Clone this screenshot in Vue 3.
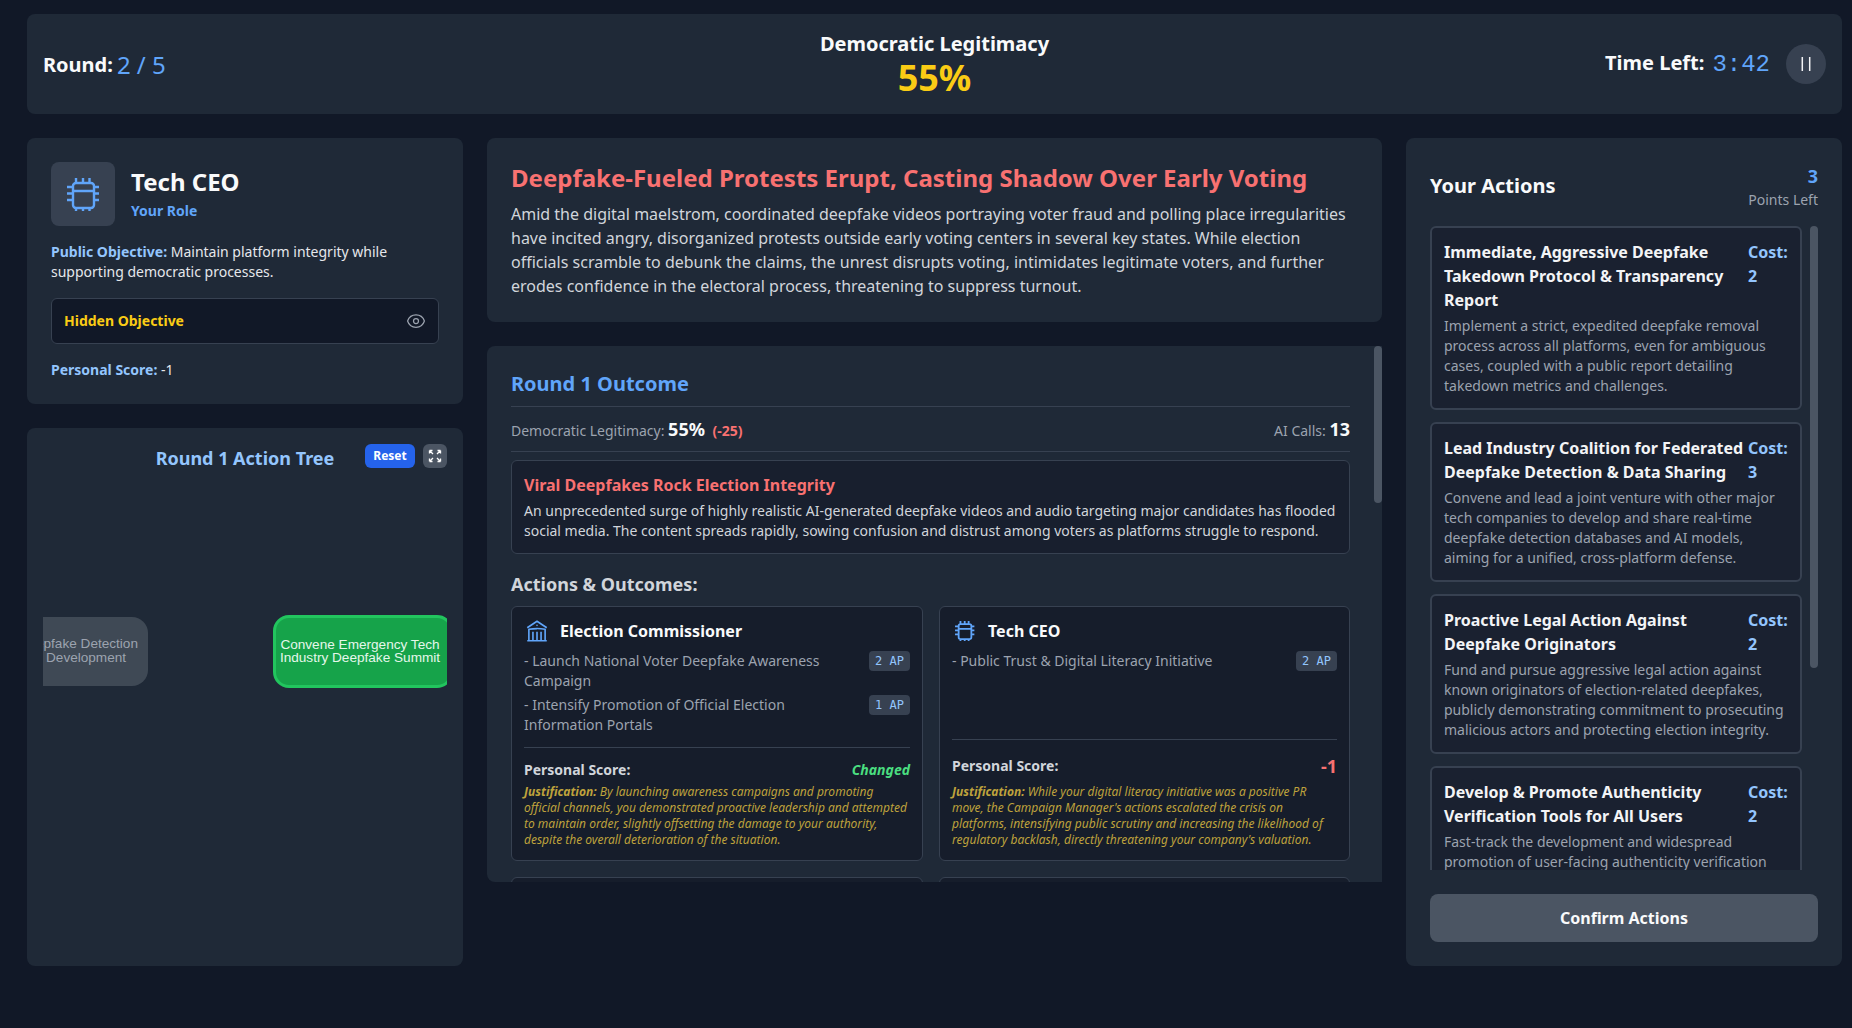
<script setup>
const chip = { vb: "62 173 43 43", sw: 3, d: "M76 183h15a3 3 0 0 1 3 3v19a3 3 0 0 1-3 3h-15a3 3 0 0 1-3-3v-19a3 3 0 0 1 3-3zM73 191h21M76 178v5M83 178v5M89.500 178v5M76 208v3M83 208v3M89.500 208v3M67 187h6M67 193.500h6M67 200h6M94 187h5M94 193.500h5M94 200h5" }
const bank = { vb: "0 0 24 24", sw: 1.5, d: "M12 21v-8.250M15.750 21v-8.250M8.250 21v-8.250M3 9l9-6 9 6m-1.500 12V10.332A48.360 48.360 0 0 0 12 9.750c-2.551 0-5.056.2-7.500.582V21M3 21h18M12 6.750h.008v.008H12V6.750Z" }

const players = [
  {
    name: "Election Commissioner", icon: bank,
    actions: [
      { text: "- Launch National Voter Deepfake Awareness Campaign", ap: "2 AP" },
      { text: "- Intensify Promotion of Official Election Information Portals", ap: "1 AP" },
    ],
    score: "Changed", scoreClass: "changed",
    just: "By launching awareness campaigns and promoting official channels, you demonstrated proactive leadership and attempted to maintain order, slightly offsetting the damage to your authority, despite the overall deterioration of the situation.",
  },
  {
    name: "Tech CEO", icon: chip,
    actions: [{ text: "- Public Trust & Digital Literacy Initiative", ap: "2 AP" }],
    score: "-1", scoreClass: "neg",
    just: "While your digital literacy initiative was a positive PR move, the Campaign Manager's actions escalated the crisis on platforms, intensifying public scrutiny and increasing the likelihood of regulatory backlash, directly threatening your company's valuation.",
  },
]

const actions = [
  { title: "Immediate, Aggressive Deepfake Takedown Protocol & Transparency Report", cost: 2, desc: "Implement a strict, expedited deepfake removal process across all platforms, even for ambiguous cases, coupled with a public report detailing takedown metrics and challenges." },
  { title: "Lead Industry Coalition for Federated Deepfake Detection & Data Sharing", cost: 3, desc: "Convene and lead a joint venture with other major tech companies to develop and share real-time deepfake detection databases and AI models, aiming for a unified, cross-platform defense." },
  { title: "Proactive Legal Action Against Deepfake Originators", cost: 2, desc: "Fund and pursue aggressive legal action against known originators of election-related deepfakes, publicly demonstrating commitment to prosecuting malicious actors and protecting election integrity." },
  { title: "Develop & Promote Authenticity Verification Tools for All Users", cost: 2, desc: "Fast-track the development and widespread promotion of user-facing authenticity verification tools across all platforms." },
]
</script>

<template>
  <div class="page">
    <header class="topbar">
      <div class="round"><span class="label">Round:</span><span class="round-val">2 / 5</span></div>
      <div class="legit">
        <div class="legit-label">Democratic Legitimacy</div>
        <div class="legit-val">55%</div>
      </div>
      <div class="timer">
        <span class="label time-label">Time Left:</span>
        <span class="time">3:42</span>
        <button class="pause" aria-label="Pause">
          <svg width="24" height="24" viewBox="0 0 24 24" fill="none" stroke="#f3f4f6" stroke-width="1.5"><path d="M8.300 5v14M15.700 5v14" /></svg>
        </button>
      </div>
    </header>

    <main class="grid">
      <section class="col">
        <div class="panel role">
          <div class="role-head">
            <div class="role-icon">
              <svg width="43" height="43" :viewBox="chip.vb" fill="none" stroke="#60a5fa" stroke-width="2.4" stroke-linejoin="round"><path :d="chip.d" /></svg>
            </div>
            <div class="role-text">
              <div class="role-name">Tech CEO</div>
              <div class="role-sub">Your Role</div>
            </div>
          </div>
          <p class="objective"><b>Public Objective:</b> Maintain platform integrity while supporting democratic processes.</p>
          <div class="hidden-box">
            <span>Hidden Objective</span>
            <svg class="eye" width="20" height="20" viewBox="0 0 24 24" fill="none" stroke="#9ca3af" stroke-width="1.5"><path d="M2.036 12.322a1.012 1.012 0 0 1 0-.639C3.423 7.51 7.36 4.5 12 4.5c4.638 0 8.573 3.007 9.963 7.178.07.207.07.431 0 .639C20.577 16.49 16.64 19.5 12 19.5c-4.638 0-8.573-3.007-9.963-7.178Z" /><path d="M15 12a3 3 0 1 1-6 0 3 3 0 0 1 6 0Z" /></svg>
          </div>
          <p class="pscore"><b>Personal Score:</b> -1</p>
        </div>

        <div class="panel tree">
          <h3 class="tree-title">Round 1 Action Tree</h3>
          <div class="tree-tools">
            <button class="reset">Reset</button>
            <button class="expand" aria-label="Expand">
              <svg width="16" height="16" viewBox="0 0 24 24" fill="none" stroke="#fff" stroke-width="2"><path d="M3.75 3.75v4.5m0-4.5h4.5m-4.5 0L9 9M3.75 20.25v-4.5m0 4.5h4.5m-4.5 0L9 15M20.25 3.75h-4.5m4.5 0v4.5m0-4.5L15 9m5.25 11.25h-4.5m4.5 0v-4.5m0 4.5L15 15" /></svg>
            </button>
          </div>
          <div class="canvas">
            <div class="node gray">
              <span class="gl1">Deepfake Detection</span>
              <span class="gl2">Development</span>
            </div>
            <div class="node green">Convene Emergency Tech<br />Industry Deepfake Summit</div>
          </div>
        </div>
      </section>

      <section class="col">
        <div class="panel event">
          <h2>Deepfake-Fueled Protests Erupt, Casting Shadow Over Early Voting</h2>
          <p>Amid the digital maelstrom, coordinated deepfake videos portraying voter fraud and polling place irregularities have incited angry, disorganized protests outside early voting centers in several key states. While election officials scramble to debunk the claims, the unrest disrupts voting, intimidates legitimate voters, and further erodes confidence in the electoral process, threatening to suppress turnout.</p>
        </div>

        <div class="panel outcome">
          <span class="thumb mid-thumb"></span>
          <h3 class="outcome-title">Round 1 Outcome</h3>
          <div class="metrics">
            <div>Democratic Legitimacy: <b>55%</b> <em>(-25)</em></div>
            <div>AI Calls: <b>13</b></div>
          </div>
          <div class="news">
            <h4>Viral Deepfakes Rock Election Integrity</h4>
            <p>An unprecedented surge of highly realistic AI-generated deepfake videos and audio targeting major candidates has flooded social media. The content spreads rapidly, sowing confusion and distrust among voters as platforms struggle to respond.</p>
          </div>
          <h4 class="ao-title">Actions &amp; Outcomes:</h4>
          <div class="players">
            <article v-for="p in players" :key="p.name" class="player">
              <div class="player-head">
                <svg width="26" height="26" :viewBox="p.icon.vb" fill="none" stroke="#60a5fa" :stroke-width="p.icon.sw" stroke-linejoin="round"><path :d="p.icon.d" /></svg>
                <span>{{ p.name }}</span>
              </div>
              <div class="player-actions">
                <div v-for="a in p.actions" :key="a.text" class="pa">
                  <span>{{ a.text }}</span>
                  <code>{{ a.ap }}</code>
                </div>
              </div>
              <div class="player-foot">
                <div class="score-row">
                  <span>Personal Score:</span>
                  <span :class="p.scoreClass">{{ p.score }}</span>
                </div>
                <p class="just"><b>Justification:</b> {{ p.just }}</p>
              </div>
            </article>
            <div class="player stub"></div>
            <div class="player stub"></div>
          </div>
        </div>
      </section>

      <section class="panel your">
        <div class="your-head">
          <h3>Your Actions</h3>
          <div class="points">
            <div class="points-val">3</div>
            <div class="points-label">Points Left</div>
          </div>
        </div>
        <div class="list-wrap">
          <span class="thumb side-thumb"></span>
          <div class="list">
            <article v-for="a in actions" :key="a.title" class="action">
              <div class="action-head">
                <span class="action-title">{{ a.title }}</span>
                <span class="cost">Cost: {{ a.cost }}</span>
              </div>
              <p>{{ a.desc }}</p>
            </article>
          </div>
        </div>
        <button class="confirm">Confirm Actions</button>
      </section>
    </main>
  </div>
</template>

<style>
html, body { margin: 0; background: #111827; }
</style>

<style scoped>
* { box-sizing: border-box; }
.page {
  width: 1852px; height: 1028px; overflow: hidden;
  padding: 14px 10px 0 27px;
  background: #111827; color: #f3f4f6;
  font-family: "Noto Sans", sans-serif;
}
h2, h3, h4, p { margin: 0; }
button { border: 0; font-family: inherit; padding: 0; }
.panel { background: #1f2937; border-radius: 8px; }

.topbar {
  height: 100px; background: #1f2937; border-radius: 8px;
  padding: 0 16px;
  display: grid; grid-template-columns: 1fr auto 1fr; align-items: center;
}
.label { font-size: 20px; font-weight: 700; color: #f9fafb; }
.round { display: flex; align-items: center; gap: 4px; margin-top: 1px; }
.round-val { font-size: 24px; font-weight: 400; color: #60a5fa; line-height: 32px; }
.legit { text-align: center; }
.legit-label { font-size: 20px; font-weight: 700; line-height: 28px; color: #f9fafb; }
.legit-val { font-size: 36px; font-weight: 700; line-height: 40px; color: #facc15; }
.timer { display: flex; align-items: center; justify-content: flex-end; }
.time-label { margin-bottom: 4px; }
.time { font-family: "Liberation Mono", monospace; font-size: 24px; color: #60a5fa; margin: 0 16px 0 8px; }
.pause { width: 40px; height: 40px; border-radius: 50%; background: #374151; display: flex; align-items: center; justify-content: center; }

.grid {
  margin-top: 24px; height: 828px;
  display: grid; grid-template-columns: 436px 895px 436px; gap: 24px;
}
.col { display: flex; flex-direction: column; gap: 24px; min-height: 0; }

.role { padding: 24px; height: 266px; flex: none; }
.role-head { display: flex; align-items: center; gap: 16px; }
.role-icon { width: 64px; height: 64px; border-radius: 8px; background: #374151; display: flex; align-items: center; justify-content: center; }
.role-text { padding-bottom: 2px; }
.role-name { font-size: 24px; font-weight: 700; line-height: 32px; color: #f9fafb; }
.role-sub { font-size: 14px; font-weight: 700; line-height: 20px; color: #60a5fa; margin-top: 3px; }
.objective { margin-top: 16px; font-size: 14px; line-height: 20px; color: #e5e7eb; }
.objective b, .pscore b { color: #93c5fd; font-weight: 700; }
.hidden-box {
  margin-top: 16px; height: 46px; padding: 0 12px 2px;
  background: #111827; border: 1px solid #374151; border-radius: 6px;
  display: flex; align-items: center; justify-content: space-between;
  font-size: 14px; font-weight: 700; color: #facc15;
}
.eye { margin-top: 2px; }
.pscore { margin-top: 16px; font-size: 14px; line-height: 20px; color: #e5e7eb; }

.tree { flex: 1; position: relative; overflow: hidden; }
.tree-title { position: absolute; left: 0; right: 0; top: 16px; text-align: center; font-size: 18px; line-height: 28px; font-weight: 700; color: #93c5fd; }
.tree-tools { position: absolute; top: 16px; right: 16px; display: flex; gap: 8px; }
.reset { height: 24px; width: 50px; padding-bottom: 2px; border-radius: 6px; background: #2563eb; color: #fff; font-size: 12px; font-weight: 700; }
.expand { width: 24px; height: 24px; border-radius: 6px; background: #4b5563; display: flex; align-items: center; justify-content: center; }
.canvas { position: absolute; left: 16px; right: 16px; top: 0; bottom: 0; overflow: hidden; font-family: "Liberation Sans", Arial, sans-serif; font-size: 13.6px; line-height: 13.3px; }
.node { position: absolute; text-align: center; }
.gray { left: -40px; top: 189px; width: 145px; height: 69px; border-radius: 16px; background: #3f4955; color: #9ca3af; }
.gl1 { position: absolute; right: 10px; top: 20px; white-space: nowrap; }
.gl2 { position: absolute; left: 43px; top: 34px; white-space: nowrap; }
.green { left: 230px; top: 187px; width: 180px; height: 73px; border-radius: 16px; background: #16a34a; border: 3px solid #22c55e; color: #e5f7ea; padding: 20px 6px 0 0; white-space: nowrap; }

.event { padding: 24px; height: 184px; flex: none; }
.event h2 { font-size: 24px; font-weight: 700; line-height: 32px; color: #f87171; }
.event p { margin-top: 8px; font-size: 16px; line-height: 24px; color: #d1d5db; }

.outcome { height: 536px; flex: none; padding: 24px 32px 0 24px; position: relative; overflow: hidden; border-radius: 8px 0 0 8px; }
.thumb { position: absolute; width: 8px; border-radius: 4px; background: #4b5563; }
.mid-thumb { right: 0; top: 0; height: 157px; }
.outcome-title { font-size: 20px; font-weight: 700; line-height: 28px; color: #60a5fa; padding-bottom: 8px; border-bottom: 1px solid #374151; }
.metrics { display: flex; justify-content: space-between; align-items: center; height: 45px; border-bottom: 1px solid #374151; font-size: 14px; color: #9ca3af; }
.metrics b { font-size: 18px; font-weight: 700; color: #f9fafb; }
.metrics em { font-style: normal; font-weight: 700; color: #f87171; margin-left: 4px; }
.news { margin-top: 8px; height: 94px; padding: 12px; background: #181f2e; border: 1px solid #374151; border-radius: 6px; }
.news h4 { font-size: 16px; font-weight: 700; line-height: 24px; color: #f87171; margin-bottom: 4px; }
.news p { font-size: 14px; line-height: 20px; color: #d1d5db; }
.ao-title { margin-top: 16px; font-size: 18px; font-weight: 700; line-height: 28px; color: #d1d5db; }
.players { margin-top: 8px; display: grid; grid-template-columns: 412px 411px; gap: 16px; }
.player { background: #161d2b; border: 1px solid #374151; border-radius: 6px; padding: 12px; display: flex; flex-direction: column; height: 255px; }
.player-head { display: flex; align-items: center; gap: 10px; height: 24px; font-size: 16px; font-weight: 700; line-height: 24px; color: #f9fafb; margin-bottom: 8px; }
.player-actions { display: flex; flex-direction: column; gap: 4px; }
.pa { display: flex; justify-content: space-between; align-items: flex-start; gap: 8px; font-size: 14px; line-height: 20px; color: #9ca3af; }
.pa code { flex: none; font-family: "DejaVu Sans Mono", monospace; font-size: 12px; line-height: 16px; padding: 2px 6px; background: #374151; border-radius: 4px; color: #93c5fd; }
.player-foot { margin-top: auto; padding-top: 12px; border-top: 1px solid #374151; }
.score-row { display: flex; justify-content: space-between; align-items: center; font-size: 14px; font-weight: 700; line-height: 20px; color: #d1d5db; margin-bottom: 4px; }
.changed { font-style: italic; font-weight: 700; color: #4ade80; }
.neg { font-size: 18px; font-weight: 700; line-height: 28px; color: #f87171; }
.just { font-size: 12px; line-height: 16px; font-style: italic; color: #bfa23c; }
.just b { font-weight: 700; }

.your { padding: 24px; display: flex; flex-direction: column; }
.your-head { display: flex; justify-content: space-between; align-items: center; height: 48px; margin-bottom: 16px; flex: none; }
.your-head h3 { font-size: 20px; font-weight: 700; color: #f9fafb; margin-bottom: 2px; }
.points { text-align: right; }
.points-val { font-size: 18px; font-weight: 700; line-height: 28px; color: #60a5fa; }
.points-label { font-size: 14px; line-height: 20px; color: #9ca3af; }
.list-wrap { position: relative; height: 644px; overflow: hidden; flex: none; }
.side-thumb { right: 0; top: 0; height: 442px; }
.list { width: 372px; display: flex; flex-direction: column; gap: 12px; }
.action { background: #1a2130; border: 2px solid #374151; border-radius: 6px; padding: 12px; }
.action-head { display: flex; gap: 4px; font-size: 16px; font-weight: 700; line-height: 24px; }
.action-title { flex: 1; color: #f3f4f6; }
.cost { flex: none; width: 40px; color: #93c5fd; }
.action p { margin-top: 4px; font-size: 14px; line-height: 20px; color: #9ca3af; }
.confirm { margin-top: 24px; height: 48px; border-radius: 8px; background: #4b5563; color: #f9fafb; font-size: 16px; font-weight: 700; flex: none; }
</style>
